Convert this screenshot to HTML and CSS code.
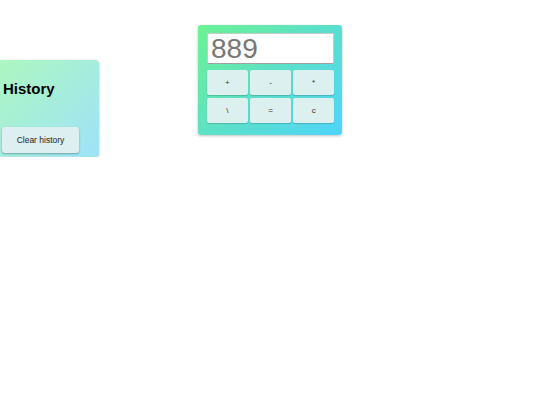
FILE: index.html
```html
<!DOCTYPE html>
<html lang="en">
<head>
<meta charset="utf-8">
<title>Calculator</title>
<link rel="stylesheet" href="styles.css">
</head>
<body>
<main class="page">
  <aside class="history">
    <h2 class="history-title">History</h2>
    <button class="clear-btn" type="button">Clear history</button>
  </aside>
  <section class="calc">
    <div class="display">889</div>
    <div class="keys">
      <button class="key" type="button">+</button>
      <button class="key" type="button">-</button>
      <button class="key" type="button">*</button>
      <button class="key" type="button">\</button>
      <button class="key" type="button">=</button>
      <button class="key" type="button">c</button>
    </div>
  </section>
</main>
</body>
</html>
```

FILE: styles.css
```css
html, body {
  margin: 0;
  padding: 0;
  background: #ffffff;
  font-family: "Liberation Sans", Arial, sans-serif;
}

.page {
  display: grid;
  grid-template-columns: 1fr 144px 1fr;
  align-items: start;
  padding-top: 25px;
}

.history {
  grid-column: 1;
  justify-self: start;
  margin-left: -2px;
  margin-top: 35px;
  width: 101px;
  box-sizing: border-box;
  padding: 4px;
  border-radius: 4px;
  background: linear-gradient(135deg, #acf7bf 0%, #a0e2f9 100%);
  box-shadow: 0 1px 3px rgba(0, 0, 0, 0.25);
}

.history-title {
  margin: 16px 0 30px 1px;
  font-size: 15px;
  font-weight: bold;
  line-height: 17px;
  color: #000;
}

.clear-btn {
  display: block;
  margin-left: 0;
  width: 77px;
  height: 26px;
  padding: 0;
  border: none;
  border-radius: 3px;
  background: #ddeff0;
  box-shadow: 0 1px 2px rgba(0, 0, 0, 0.3);
  font-family: "Liberation Sans", Arial, sans-serif;
  font-size: 8.5px;
  color: #222;
}

.calc {
  grid-column: 2;
  box-sizing: border-box;
  width: 144px;
  height: 110px;
  padding: 8px 8px 12px 9px;
  border-radius: 3px;
  background: linear-gradient(135deg, #6cf294 0%, #5ce0c9 50%, #4fd5fb 100%);
  box-shadow: 0 1px 3px rgba(0, 0, 0, 0.25);
}

.display {
  box-sizing: border-box;
  height: 31px;
  padding-left: 3px;
  background: #fff;
  border: 1px solid #c9c9c9;
  border-bottom-color: #a0a0a0;
  font-size: 28px;
  line-height: 29px;
  color: #777;
}

.keys {
  display: grid;
  grid-template-columns: repeat(3, 1fr);
  grid-auto-rows: 25px;
  gap: 3px 2.5px;
  margin-top: 6px;
}

.key {
  padding: 0;
  border: none;
  border-radius: 2px;
  background: #dcf0f0;
  box-shadow: 0 1px 1px rgba(0, 0, 0, 0.18);
  font-family: "Liberation Sans", Arial, sans-serif;
  font-size: 8px;
  color: #333;
}
```
